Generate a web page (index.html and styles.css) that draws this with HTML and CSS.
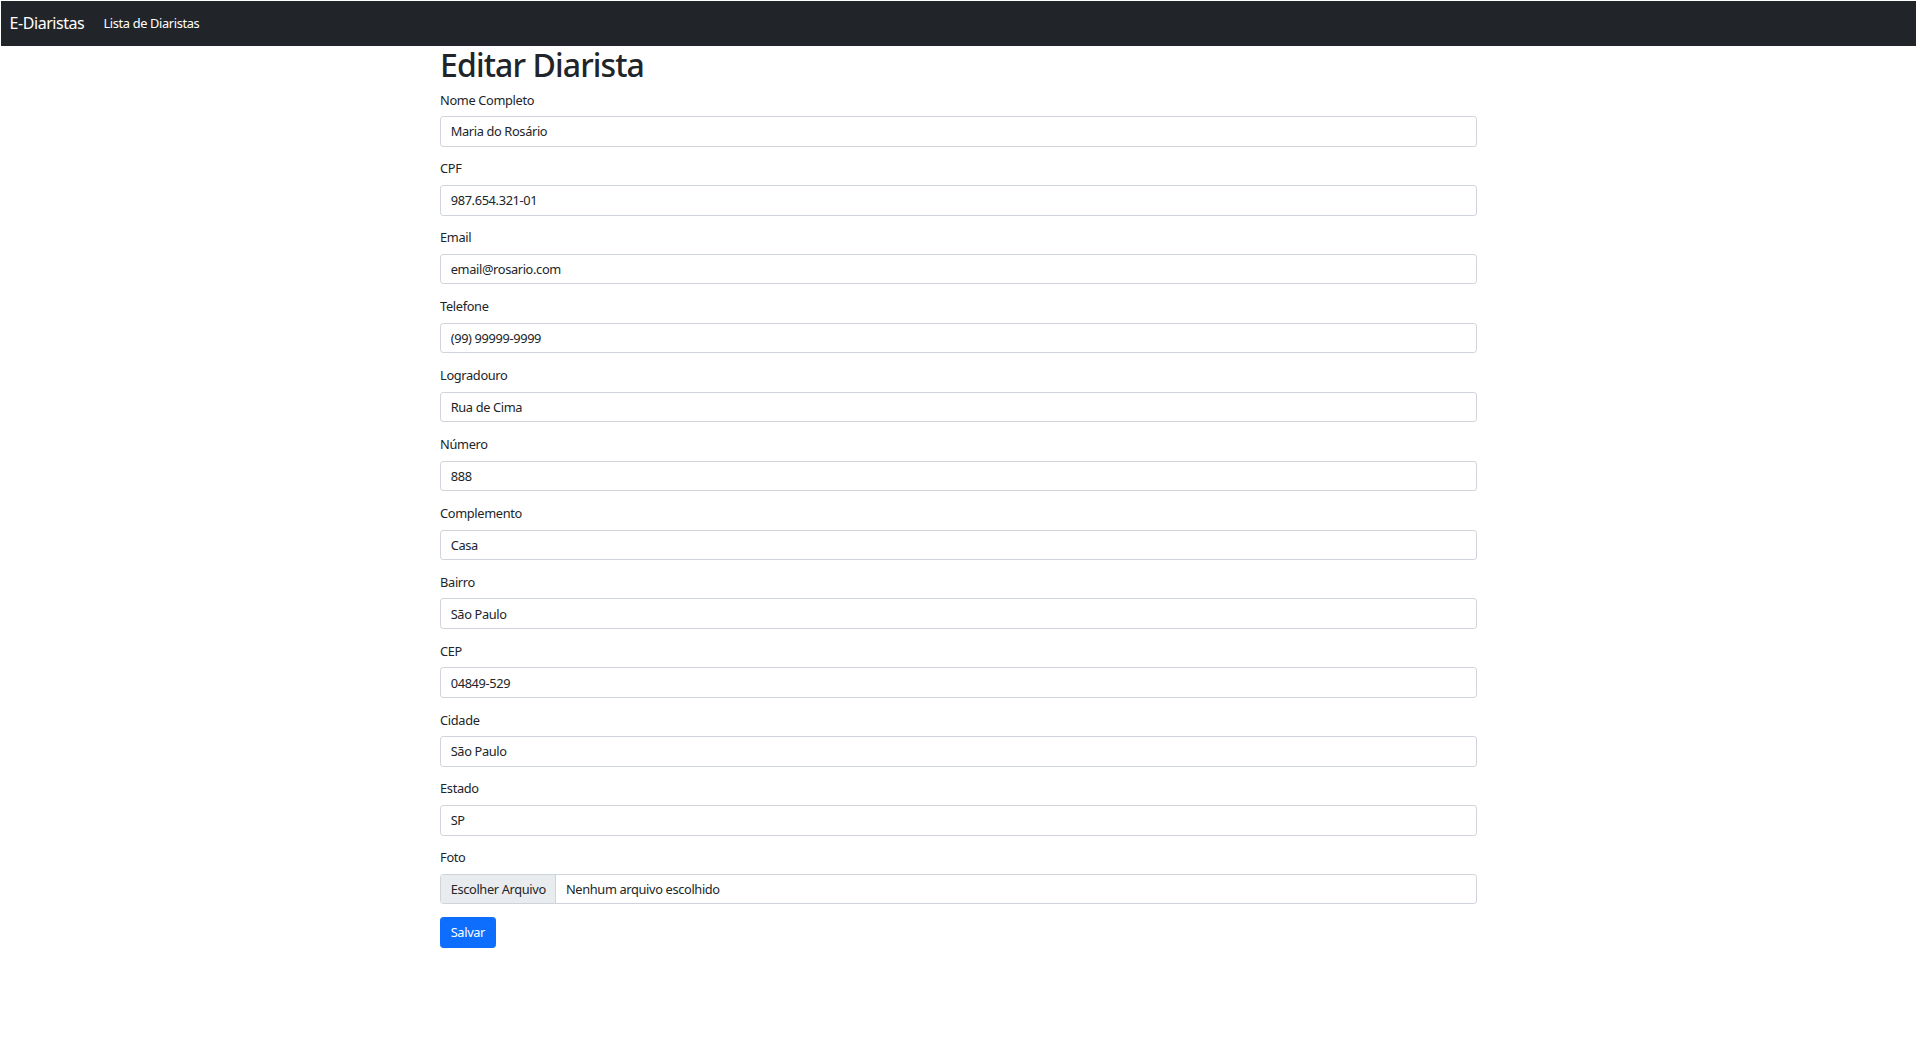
FILE: index.html
```html
<!DOCTYPE html>
<html lang="pt-BR">
<head>
<meta charset="utf-8">
<title>Editar Diarista</title>
<link rel="stylesheet" href="styles.css">
</head>
<body>
<nav class="navbar">
  <div class="navbar-inner">
    <a class="brand" href="#">E-Diaristas</a>
    <a class="nav-link" href="#">Lista de Diaristas</a>
  </div>
</nav>
<main class="container">
  <h1 class="title">Editar Diarista</h1>
  <form class="form">
    <div class="field">
      <label class="label">Nome Completo</label>
      <input class="input" type="text" value="Maria do Rosário">
    </div>
    <div class="field">
      <label class="label">CPF</label>
      <input class="input" type="text" value="987.654.321-01">
    </div>
    <div class="field">
      <label class="label">Email</label>
      <input class="input" type="text" value="email@rosario.com">
    </div>
    <div class="field">
      <label class="label">Telefone</label>
      <input class="input" type="text" value="(99) 99999-9999">
    </div>
    <div class="field">
      <label class="label">Logradouro</label>
      <input class="input" type="text" value="Rua de Cima">
    </div>
    <div class="field">
      <label class="label">Número</label>
      <input class="input" type="text" value="888">
    </div>
    <div class="field">
      <label class="label">Complemento</label>
      <input class="input" type="text" value="Casa">
    </div>
    <div class="field">
      <label class="label">Bairro</label>
      <input class="input" type="text" value="São Paulo">
    </div>
    <div class="field">
      <label class="label">CEP</label>
      <input class="input" type="text" value="04849-529">
    </div>
    <div class="field">
      <label class="label">Cidade</label>
      <input class="input" type="text" value="São Paulo">
    </div>
    <div class="field">
      <label class="label">Estado</label>
      <input class="input" type="text" value="SP">
    </div>
    <div class="field">
      <label class="label">Foto</label>
      <div class="file">
        <span class="file-btn">Escolher Arquivo</span>
        <span class="file-name">Nenhum arquivo escolhido</span>
      </div>
    </div>
    <button class="btn" type="button">Salvar</button>
  </form>
</main>
</body>
</html>
```
FILE: styles.css
```css
* { box-sizing: border-box; }
html, body { background: #fff; }
body {
  margin: 1px 2px 0 1px;
  font-family: "Noto Sans", "Open Sans", sans-serif;
  font-size: 12.8px;
  line-height: 19.2px;
  letter-spacing: -0.35px;
  color: #212529;
}
.navbar {
  background: #212529;
  padding: 6.4px 0;
}
.navbar-inner {
  display: flex;
  align-items: center;
  padding: 0 8.6px;
}
.brand {
  color: #fff;
  text-decoration: none;
  font-size: 16px;
  line-height: 24px;
  letter-spacing: -0.45px;
  padding: 4px 0;
  margin-right: 12.8px;
}
.nav-link {
  color: #fff;
  text-decoration: none;
  font-size: 12.8px;
  line-height: 19.2px;
  padding: 6.4px 6.4px;
}
.container {
  width: 1056px;
  margin: 0 auto;
  padding: 0 9.6px;
}
.title {
  margin: 0 0 6.4px;
  font-size: 32px;
  line-height: 38.4px;
  font-weight: 500;
  letter-spacing: -0.9px;
}
.field { margin-bottom: 12.8px; }
.label {
  display: block;
  margin-bottom: 6.4px;
}
.input {
  display: block;
  width: 100%;
  height: 30.5px;
  padding: 4.8px 9.6px;
  font: inherit;
  letter-spacing: inherit;
  color: #212529;
  border: 1px solid #ced4da;
  border-radius: 3.2px;
  background: #fff;
}
.file {
  display: flex;
  height: 30.5px;
  border: 1px solid #ced4da;
  border-radius: 3.2px;
  overflow: hidden;
}
.file-btn {
  background: #e9ecef;
  padding: 4.8px 9.6px;
  border-right: 1px solid #ced4da;
}
.file-name {
  padding: 4.8px 9.6px;
}
.btn {
  font: inherit;
  letter-spacing: inherit;
  color: #fff;
  background: #0d6efd;
  border: 1px solid #0d6efd;
  border-radius: 3.2px;
  padding: 4.8px 9.6px;
  height: 30.5px;
}
```
